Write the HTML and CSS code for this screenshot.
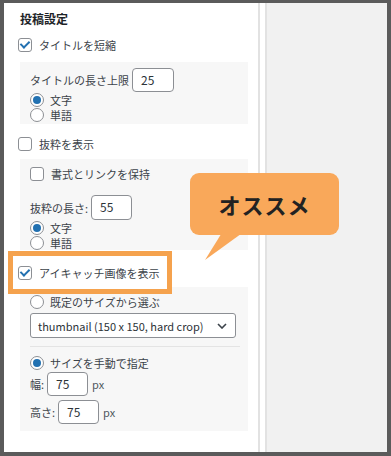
FILE: index.html
```html
<!DOCTYPE html>
<html lang="ja">
<head>
    <meta charset="UTF-8">
    <meta name="viewport" content="width=device-width, initial-scale=1.0">
    <title>投稿設定</title>
    <link rel="stylesheet" href="styles.css">
</head>
<body>
    <div class="frame">
        <div class="panel">
            <h2 class="panel-title">投稿設定</h2>

            <label class="check-row row-title">
                <span class="checkbox checked"></span>タイトルを短縮
            </label>
            <div class="sub-box sub-title">
                <div class="field-row">
                    <span>タイトルの長さ上限</span>
                    <span class="text-input input-title">25</span>
                </div>
                <div class="radio-row"><span class="radio checked"></span>文字</div>
                <div class="radio-row"><span class="radio"></span>単語</div>
            </div>

            <label class="check-row row-excerpt">
                <span class="checkbox"></span>抜粋を表示
            </label>
            <div class="sub-box sub-excerpt">
                <label class="check-row">
                    <span class="checkbox"></span>書式とリンクを保持
                </label>
                <div class="field-row excerpt-length">
                    <span>抜粋の長さ:</span>
                    <span class="text-input input-excerpt">55</span>
                </div>
                <div class="radio-row"><span class="radio checked"></span>文字</div>
                <div class="radio-row"><span class="radio"></span>単語</div>
            </div>

            <label class="check-row highlight">
                <span class="checkbox checked"></span>アイキャッチ画像を表示
            </label>
            <div class="sub-box sub-thumb">
                <div class="select-wrap">
                    <div class="radio-row"><span class="radio"></span>既定のサイズから選ぶ</div>
                    <div class="select">
                        <span>thumbnail (150 x 150, hard crop)</span>
                        <svg width="10" height="6" viewBox="0 0 10 6"><path d="M1 1l4 4 4-4" fill="none" stroke="#3c434a" stroke-width="1.6"/></svg>
                    </div>
                </div>
                <div class="radio-row manual"><span class="radio checked"></span>サイズを手動で指定</div>
                <div class="field-row size-row">
                    <span>幅:</span>
                    <span class="text-input input-size">75</span>
                    <span class="unit">px</span>
                </div>
                <div class="field-row size-row height-row">
                    <span>高さ:</span>
                    <span class="text-input input-size">75</span>
                    <span class="unit">px</span>
                </div>
            </div>

            <div class="bubble">オススメ</div>
        </div>
        <div class="gutter"></div>
        <div class="side"></div>
    </div>
</body>
</html>
```

FILE: styles.css
```css
body {
    margin: 0;
    font-family: "Noto Sans CJK JP", "Noto Sans", sans-serif;
    color: #3c434a;
    font-size: 11px;
}

.frame {
    width: 391px;
    height: 456px;
    box-sizing: border-box;
    border-style: solid;
    border-color: #5b5b5b;
    border-width: 3px 4px 4px 4px;
    display: flex;
    background-color: #fff;
}

.panel {
    position: relative;
    width: 256px;
    box-sizing: border-box;
    padding-left: 14px;
    border-right: 2px solid #e2e2e2;
}

.gutter {
    width: 5px;
    border-right: 2px solid #e2e2e2;
}

.side {
    flex: 1;
    background-color: #f1f1f1;
}

.panel-title {
    margin: 9px 0 0 2px;
    font-size: 12px;
    line-height: 14px;
    font-weight: bold;
    color: #1d2327;
}

.check-row {
    display: flex;
    align-items: center;
    gap: 7px;
    height: 20px;
}

.row-title {
    margin-top: 9px;
}

.row-excerpt {
    margin-top: 10px;
}

.checkbox {
    width: 12px;
    height: 12px;
    border: 1px solid #8c8f94;
    border-radius: 3px;
    background-color: #fff;
    position: relative;
}

.checkbox.checked::after {
    content: "";
    position: absolute;
    left: 3px;
    top: 0px;
    width: 4px;
    height: 7px;
    border: solid #2271b1;
    border-width: 0 2px 2px 0;
    transform: rotate(45deg);
}

.radio-row {
    display: flex;
    align-items: center;
    gap: 6px;
    height: 15px;
}

.radio {
    width: 12px;
    height: 12px;
    border: 1px solid #8c8f94;
    border-radius: 50%;
    background-color: #fff;
    display: flex;
    align-items: center;
    justify-content: center;
}

.radio.checked::after {
    content: "";
    width: 8px;
    height: 8px;
    border-radius: 50%;
    background-color: #2271b1;
}

.sub-box {
    margin-left: 2px;
    width: 228px;
    box-sizing: border-box;
    padding-left: 10px;
    background-color: #f7f7f7;
}

.sub-title {
    margin-top: 7px;
    padding-top: 6px;
    padding-bottom: 2px;
}

.sub-excerpt {
    margin-top: 5px;
    padding-top: 5px;
}

.field-row {
    display: flex;
    align-items: center;
    gap: 3px;
}

.text-input {
    box-sizing: border-box;
    height: 24px;
    border: 1px solid #8c8f94;
    border-radius: 4px;
    background-color: #fff;
    padding-left: 8px;
    font-size: 12px;
    line-height: 22px;
    color: #2c3338;
}

.input-title {
    width: 42px;
}

.excerpt-length {
    margin-top: 11px;
}

.input-excerpt {
    width: 41px;
    height: 25px;
}

.highlight {
    position: relative;
    z-index: 1;
    margin: 1px 0 0 -10px;
    width: 164px;
    height: 43px;
    box-sizing: border-box;
    border: 5px solid #f5a24d;
    padding-left: 5px;
    background-color: #fff;
}

.sub-thumb {
    margin-top: -7px;
    padding-top: 8px;
    padding-bottom: 7px;
}

.sub-thumb .radio-row {
    height: 14px;
}

.select-wrap {
    width: 210px;
    padding-bottom: 8px;
    border-bottom: 1px solid #e4e4e4;
}

.select {
    margin-top: 4px;
    width: 206px;
    height: 25px;
    box-sizing: border-box;
    border: 1px solid #8c8f94;
    border-radius: 3px;
    background-color: #fff;
    display: flex;
    align-items: center;
    justify-content: space-between;
    padding: 0 8px 0 7px;
    font-size: 11px;
    white-space: nowrap;
    color: #2c3338;
}

.sub-thumb .manual {
    margin-top: 9px;
}

.size-row {
    margin-top: 2px;
}

.height-row {
    margin-top: 4px;
}

.input-size {
    width: 41px;
}

.unit {
    margin-left: 1px;
    color: #50575e;
}

.bubble {
    position: absolute;
    left: 186px;
    top: 170px;
    width: 149px;
    height: 62px;
    border-radius: 9px;
    background-color: #f9a85a;
    color: #222;
    font-size: 22px;
    font-weight: bold;
    letter-spacing: 1px;
    display: flex;
    align-items: center;
    justify-content: center;
}

.bubble::after {
    content: "";
    position: absolute;
    left: 10px;
    top: 58px;
    width: 50px;
    height: 31px;
    background-color: #f9a85a;
    clip-path: polygon(23px 0, 45px 0, 5px 29px);
}
```
